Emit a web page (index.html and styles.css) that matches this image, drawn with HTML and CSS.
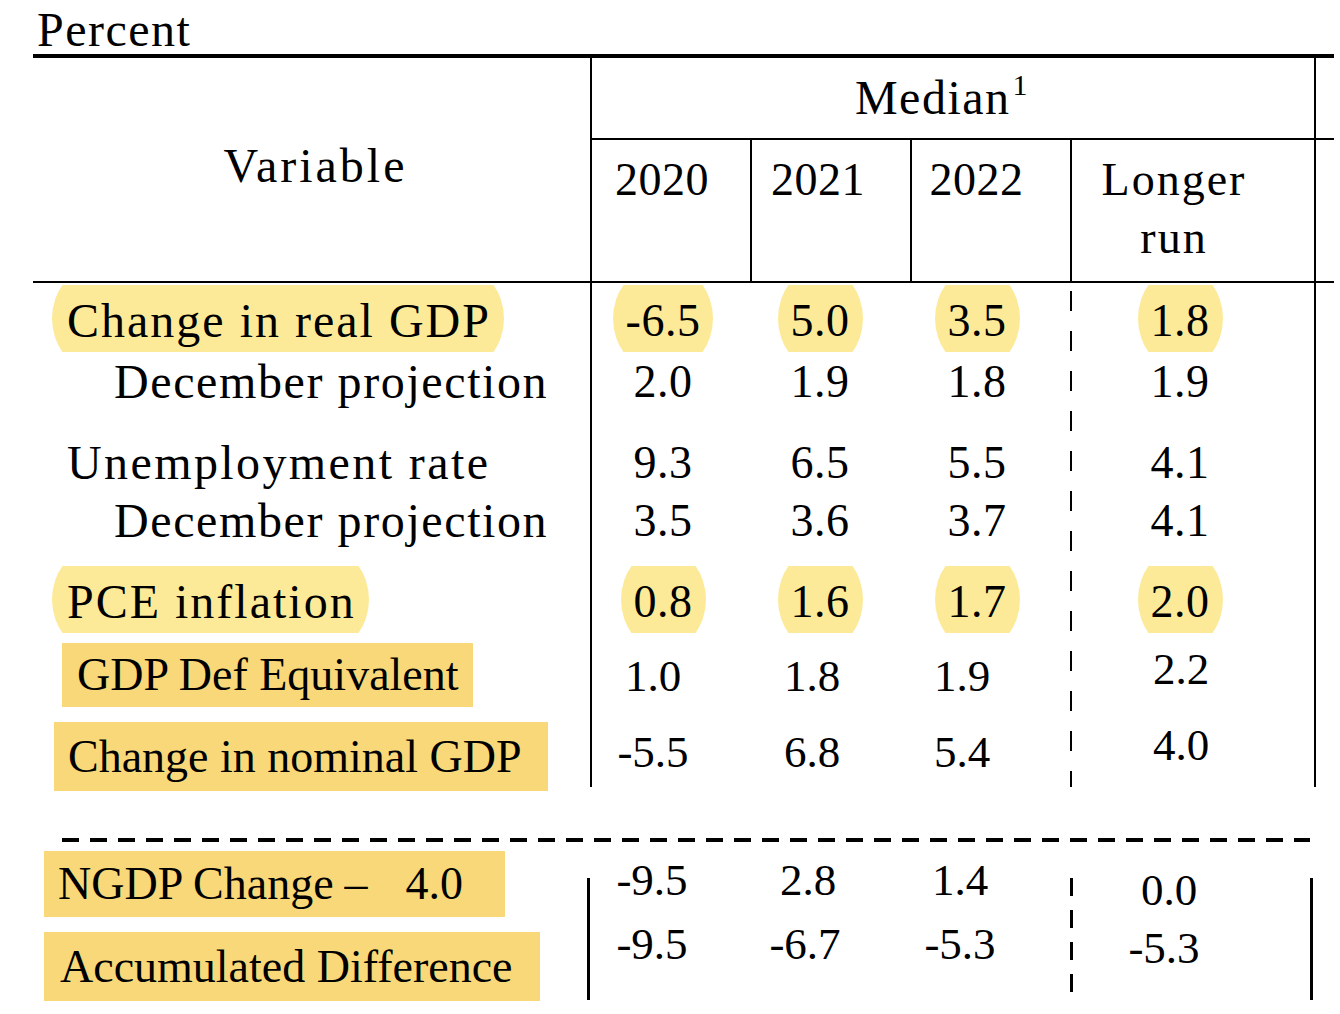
FILE: index.html
```html
<!DOCTYPE html>
<html lang="en">
<head>
<meta charset="utf-8">
<title>Economic projections</title>
<link rel="stylesheet" href="styles.css">
</head>
<body>
<div class="page">
  <div class="caption">Percent</div>

  <div class="table">
    <div class="head">
      <div class="h-var">Variable</div>
      <div class="h-median"><span class="median-text">Median<sup>1</sup></span></div>
      <div class="h-edge"></div>
      <div class="h-year y1">2020</div>
      <div class="h-year y2">2021</div>
      <div class="h-year y3">2022</div>
      <div class="h-year y4">Longer<br>run</div>
    </div>

    <div class="body">
      <div class="row cm r1">
        <div class="lab lab-main"><span class="pill">Change in real GDP</span></div>
        <div class="v v1"><span class="pill">-6.5</span></div>
        <div class="v v2"><span class="pill">5.0</span></div>
        <div class="v v3"><span class="pill">3.5</span></div>
        <div class="v v4"><span class="pill">1.8</span></div>
      </div>
      <div class="row cm r2">
        <div class="lab lab-sub">December projection</div>
        <div class="v v1">2.0</div>
        <div class="v v2">1.9</div>
        <div class="v v3">1.8</div>
        <div class="v v4">1.9</div>
      </div>
      <div class="spacer"></div>
      <div class="row cm r3">
        <div class="lab lab-plain">Unemployment rate</div>
        <div class="v v1">9.3</div>
        <div class="v v2">6.5</div>
        <div class="v v3">5.5</div>
        <div class="v v4">4.1</div>
      </div>
      <div class="row cm r4">
        <div class="lab lab-sub">December projection</div>
        <div class="v v1">3.5</div>
        <div class="v v2">3.6</div>
        <div class="v v3">3.7</div>
        <div class="v v4">4.1</div>
      </div>
      <div class="row cm r5">
        <div class="lab lab-main"><span class="pill">PCE inflation</span></div>
        <div class="v v1"><span class="pill">0.8</span></div>
        <div class="v v2"><span class="pill">1.6</span></div>
        <div class="v v3"><span class="pill">1.7</span></div>
        <div class="v v4"><span class="pill">2.0</span></div>
      </div>
      <div class="row tm r6">
        <div class="lab"><span class="box box-def">GDP Def Equivalent</span></div>
        <div class="v t1">1.0</div>
        <div class="v t2">1.8</div>
        <div class="v t3">1.9</div>
        <div class="v t4 raised">2.2</div>
      </div>
      <div class="row tm r7">
        <div class="lab"><span class="box box-nom">Change in nominal GDP</span></div>
        <div class="v t1">-5.5</div>
        <div class="v t2">6.8</div>
        <div class="v t3">5.4</div>
        <div class="v t4 raised">4.0</div>
      </div>
    </div>
  </div>

  <div class="dash-rule"></div>

  <div class="lower">
    <div class="lower-labels">
      <div class="box box-ngdp">NGDP Change<span class="op">–</span>4.0</div>
      <div class="box box-acc">Accumulated Difference</div>
    </div>
    <div class="lower-values">
      <div class="lv l1">-9.5</div>
      <div class="lv l2">2.8</div>
      <div class="lv l3">1.4</div>
      <div class="lv l4 a">0.0</div>
      <div class="lv l1">-9.5</div>
      <div class="lv l2 b">-6.7</div>
      <div class="lv l3">-5.3</div>
      <div class="lv l4 b4">-5.3</div>
    </div>
  </div>
</div>
</body>
</html>
```

FILE: styles.css
```css
* {
  box-sizing: border-box;
  margin: 0;
  padding: 0;
}

html, body {
  margin: 0;
  background: #ffffff;
}

body {
  width: 1340px;
  height: 1014px;
  overflow: hidden;
  color: #000000;
  font-family: "Liberation Serif", "Times New Roman", serif;
}

.page {
  width: 1340px;
}

.caption {
  height: 54px;
  padding: 6px 0 0 37px;
  font-size: 48px;
  line-height: 48px;
  letter-spacing: 1.5px;
}

/* ---------- upper table ---------- */
.table {
  margin-left: 33px;
  width: 1301px;
  border-top: 4px solid #000;
}

.head {
  display: grid;
  grid-template-columns: 557px 160px 160px 160px 246px 18px;
  grid-template-rows: 82px 141px;
  border-bottom: 2px solid #000;
  font-size: 48px;
  letter-spacing: 1.5px;
}

.h-var {
  grid-row: 1 / 3;
  grid-column: 1;
  display: flex;
  align-items: center;
  justify-content: center;
  padding-bottom: 9px;
  padding-left: 8px;
  letter-spacing: 3px;
}

.h-median {
  grid-row: 1;
  grid-column: 2 / 6;
  display: flex;
  align-items: center;
  justify-content: center;
  padding-right: 22px;
  border-left: 2px solid #000;
  border-right: 2px solid #000;
  border-bottom: 2px solid #000;
}

.median-text {
  line-height: 60px;
}

.median-text sup {
  font-size: 30px;
  line-height: 0;
  vertical-align: 19px;
  margin-left: 2px;
}

.h-edge {
  grid-row: 1;
  grid-column: 6;
  border-bottom: 2px solid #000;
}

.h-year {
  grid-row: 2;
  border-left: 2px solid #000;
  padding-top: 11px;
  font-size: 46px;
  line-height: 58px;
  letter-spacing: 0.5px;
  text-align: center;
}

.y1 { grid-column: 2; padding-right: 18px; }
.y2 { grid-column: 3; padding-right: 26px; }
.y3 { grid-column: 4; padding-right: 29px; }
.y4 {
  grid-column: 5;
  padding-right: 38px;
  border-right: 2px solid #000;
  letter-spacing: 2px;
}

.body {
  height: 504px;
  background:
    linear-gradient(#000, #000) 557px 0 / 2px 100% no-repeat,
    linear-gradient(#000, #000) 1281px 0 / 2px 100% no-repeat,
    repeating-linear-gradient(to bottom, #000 0 20px, transparent 20px 40px) 1037px 8px / 2px 100% no-repeat;
}

.row {
  display: grid;
  grid-template-columns: 557px 160px 160px 160px 246px;
  align-items: center;
}

.cm {
  font-size: 48px;
  letter-spacing: 2px;
}

.cm .v {
  font-size: 46px;
  letter-spacing: 0.5px;
}

.tm {
  font-size: 45px;
}

.r1 { height: 71px; }
.r2 { height: 52px; }
.spacer { height: 27px; }
.r3 { height: 58px; }
.r4 { height: 58px; }
.r5 { height: 91px; align-items: start; padding-top: 17px; }
.r6 { height: 72px; }
.r7 { height: 75px; }

.lab-main { padding-left: 19px; }
.lab-sub { padding-left: 81px; letter-spacing: 1.6px; }
.lab-plain { padding-left: 34px; letter-spacing: 2.4px; }

.v {
  text-align: center;
}

.v1 { padding-right: 14px; }
.v2 { padding-right: 20px; }
.v3 { padding-right: 26px; }
.v4 { padding-right: 26px; }

.t1 { padding-right: 34px; }
.t2 { padding-right: 36px; }
.t3 { padding-right: 56px; }
.t4 { padding-right: 24px; }
.raised { padding-bottom: 14px; }

/* soft highlight with curved sides, cut flat at top and bottom */
.pill {
  position: relative;
  z-index: 0;
  display: inline-block;
  height: 67px;
  padding: 4px 13px 0;
  line-height: 63px;
  overflow: hidden;
  vertical-align: top;
}

.lab .pill {
  padding: 4px 13px 0 15px;
}

.pill::before {
  content: "";
  position: absolute;
  z-index: -1;
  top: -17px;
  bottom: -17px;
  left: 0;
  right: 0;
  border-radius: 42px / 51px;
  background: #fcea98;
}

/* solid highlight boxes */
.box {
  display: block;
  background: #f8d878;
  font-size: 46px;
  letter-spacing: 0;
}

.box-def {
  margin-top: 3px;
  margin-left: 29px;
  width: 411px;
  height: 64px;
  padding-left: 15px;
  line-height: 64px;
}

.r6 .lab, .r7 .lab { align-self: start; }

.box-nom {
  margin-top: 10px;
  margin-left: 21px;
  width: 494px;
  height: 69px;
  padding-left: 14px;
  line-height: 69px;
}

/* ---------- lower block ---------- */
.dash-rule {
  margin-top: 51px;
  margin-left: 62px;
  width: 1248px;
  height: 4px;
  background: repeating-linear-gradient(90deg, #000 0 17px, transparent 17px 28px);
}

.lower {
  display: grid;
  grid-template-columns: 554px 729px;
  margin-left: 33px;
  height: 172px;
}

.lower-labels {
  display: flex;
  flex-direction: column;
  gap: 15px;
  padding-top: 9px;
}

.box-ngdp {
  margin-left: 11px;
  width: 461px;
  height: 66px;
  padding-left: 14px;
  line-height: 66px;
}

.op {
  margin: 0 38px 0 11px;
}

.box-acc {
  margin-left: 11px;
  width: 496px;
  height: 69px;
  padding-left: 16px;
  line-height: 69px;
}

.lower-values {
  display: grid;
  grid-template-columns: 163px 160px 160px 246px;
  grid-template-rows: 64px 64px;
  align-content: start;
  padding-top: 6px;
  height: 163px;
  font-size: 45px;
  background:
    linear-gradient(#000, #000) 0 36px / 3px 122px no-repeat,
    linear-gradient(#000, #000) 723px 36px / 3px 122px no-repeat,
    repeating-linear-gradient(to bottom, #000 0 18px, transparent 18px 32px) 483px 36px / 3px 122px no-repeat;
}

.lv {
  height: 64px;
  line-height: 64px;
  text-align: center;
}

.l1 { padding-right: 33px; }
.l2 { padding-right: 44px; }
.l2.b { padding-right: 50px; }
.l3 { padding-right: 60px; }
.l4 { padding-right: 48px; }
.l4.a { padding-top: 10px; }
.l4.b4 { padding-top: 4px; padding-right: 58px; }
```
